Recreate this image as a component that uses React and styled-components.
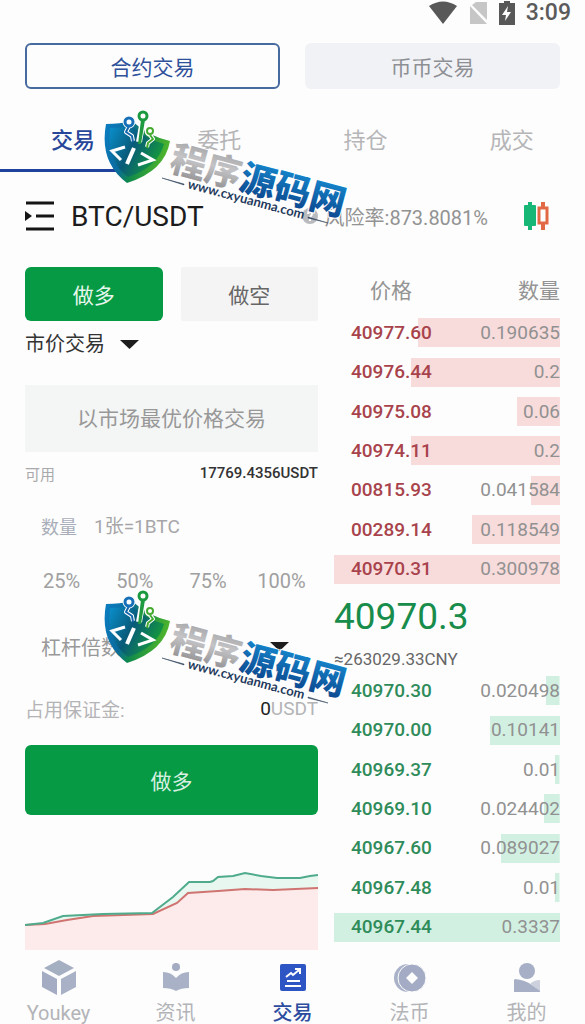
import React, { useState } from "react";
import styled, { createGlobalStyle, css } from "styled-components";

const GlobalStyle = createGlobalStyle`
	* {
		box-sizing: border-box;
	}

	body {
		margin: 0;
		background: #fdfdfd;
		font-family: Roboto, "Noto Sans CJK SC", sans-serif;
		color: #222;
	}

	button,
	input,
	select {
		margin: 0;
		padding: 0;
		border: 0;
		background: none;
		font: inherit;
		color: inherit;
	}

	button,
	select {
		cursor: pointer;
	}
`;

const asks = [
	{ price: "40977.60", amount: "0.190635", depth: 63 },
	{ price: "40976.44", amount: "0.2", depth: 66 },
	{ price: "40975.08", amount: "0.06", depth: 19 },
	{ price: "40974.11", amount: "0.2", depth: 66 },
	{ price: "00815.93", amount: "0.041584", depth: 13 },
	{ price: "00289.14", amount: "0.118549", depth: 39 },
	{ price: "40970.31", amount: "0.300978", depth: 100 },
];

const bids = [
	{ price: "40970.30", amount: "0.020498", depth: 6 },
	{ price: "40970.00", amount: "0.10141", depth: 31 },
	{ price: "40969.37", amount: "0.01", depth: 2 },
	{ price: "40969.10", amount: "0.024402", depth: 7 },
	{ price: "40967.60", amount: "0.089027", depth: 26 },
	{ price: "40967.48", amount: "0.01", depth: 2 },
	{ price: "40967.44", amount: "0.3337", depth: 100 },
];

const Page = styled.div`
	position: relative;
	overflow: hidden;
`;

const StatusBar = styled.div`
	display: flex;
	justify-content: flex-end;
	align-items: center;
	height: 26px;
	padding-right: 14px;
	font-size: 23px;
	font-weight: 500;
	line-height: 26px;
	color: #5b5b5b;

	svg {
		display: block;
		margin-right: 11px;
	}
`;

const Switch = styled.div`
	display: grid;
	grid-template-columns: 1fr 1fr;
	gap: 25px;
	padding: 17px 25px 0;
`;

const SwitchButton = styled.button`
	height: 46px;
	border-radius: 6px;
	font-size: 21px;
	background: #f1f2f6;
	color: #8d8f94;

	${(props) =>
		props.$active &&
		css`
			background: #fdfdfd;
			border: 2px solid #476b9f;
			color: #2f519b;
		`}
`;

const Tabs = styled.nav`
	display: grid;
	grid-template-columns: repeat(4, 1fr);
	margin-top: 17px;
`;

const Tab = styled.button`
	height: 66px;
	border-bottom: 3px solid
		${(props) => (props.$active ? "#1f429c" : "transparent")};
	font-size: 22px;
	font-weight: ${(props) => (props.$active ? 500 : 400)};
	color: ${(props) => (props.$active ? "#27469a" : "#b5b5b7")};
`;

const PairBar = styled.header`
	display: flex;
	align-items: center;
	height: 85px;
	padding: 3px 35px 0 25px;

	svg {
		display: block;
		flex: none;
	}
`;

const Pair = styled.h1`
	flex: 1;
	margin: 0 0 0 16px;
	font-size: 28px;
	font-weight: 400;
	color: #1c1c1c;
`;

const Risk = styled.div`
	display: flex;
	align-items: center;
	gap: 7px;
	margin-right: 36px;
	font-size: 20px;
	color: #939393;
`;

const Columns = styled.main`
	display: grid;
	grid-template-columns: 293fr 226fr;
	gap: 16px;
	padding: 10px 25px 0;
`;

const Form = styled.form`
	display: flex;
	flex-direction: column;
	min-width: 0;
`;

const Sides = styled.div`
	display: grid;
	grid-template-columns: 1fr 1fr;
	gap: 18px;
`;

const SideButton = styled.button`
	height: 54px;
	border-radius: ${(props) => (props.$active ? "6px" : "2px")};
	font-size: 21px;
	background: ${(props) => (props.$active ? "#059a43" : "#f4f4f4")};
	color: ${(props) => (props.$active ? "#e8f7ee" : "#666")};
`;

const SelectBox = styled.div`
	display: flex;
	align-items: center;
	gap: 15px;
	height: 46px;

	svg {
		display: block;
		pointer-events: none;
	}
`;

const Select = styled.select`
	appearance: none;
	font-size: 20px;
	line-height: 30px;
	color: #333;
	outline: none;
`;

const PriceInput = styled.input`
	width: 100%;
	height: 67px;
	margin-top: 18px;
	background: #f4f5f5;
	font-size: 21px;
	text-align: center;

	&::placeholder {
		color: #989898;
		opacity: 1;
	}
`;

const Available = styled.div`
	display: flex;
	justify-content: space-between;
	align-items: center;
	height: 42px;
	font-size: 15px;
	color: #a9a9ab;

	strong {
		font-weight: 500;
		color: #333;
	}
`;

const Quantity = styled.div`
	display: flex;
	align-items: center;
	gap: 17px;
	height: 64px;
	padding-left: 16px;
	font-size: 18px;
	color: #a8adb9;

	input {
		flex: 1;
		min-width: 0;
		font-size: 19px;
		outline: none;
	}

	input::placeholder {
		color: #a6a6a8;
		opacity: 1;
	}
`;

const Percents = styled.div`
	display: grid;
	grid-template-columns: repeat(4, 1fr);
	height: 46px;

	button {
		font-size: 20px;
		color: #a0a0a0;
	}
`;

const Leverage = styled.div`
	display: flex;
	align-items: center;
	height: 84px;
	padding: 0 29px 0 16px;
	font-size: 20px;
	color: #999;

	select {
		flex: 1;
		min-width: 0;
	}

	svg {
		display: block;
		pointer-events: none;
	}
`;

const Margin = styled.div`
	display: flex;
	justify-content: space-between;
	align-items: center;
	height: 40px;
	font-size: 19px;
	color: #b4b4b6;

	b {
		font-weight: 400;
		color: #222;
	}
`;

const Submit = styled.button`
	height: 70px;
	margin-top: 17px;
	border-radius: 6px;
	background: #059a43;
	font-size: 21px;
	color: #d8f0e1;
`;

const Chart = styled.svg`
	display: block;
	width: 100%;
	height: 79px;
	margin-top: 56px;
`;

const Book = styled.section`
	min-width: 0;
`;

const BookBody = styled.tbody`
	height: 276px;
`;

const BookTable = styled.table`
	width: 100%;
	height: ${(props) => (props.$head ? "322px" : "276px")};
	border-collapse: collapse;
	font-size: 19px;
	line-height: 22px;

	th {
		height: 46px;
		padding: 2px 0 0;
		font-size: 21px;
		font-weight: 400;
		color: #949494;
		text-align: right;
	}

	th:first-child {
		padding-left: 36px;
		text-align: left;
	}
`;

const BookRow = styled.tr`
	background: linear-gradient(
			${(props) => (props.$side === "ask" ? "#f8dcdc" : "#d2f0e2")} 0 0
		)
		right center / ${(props) => props.$depth}% 29px no-repeat;

	td {
		padding: 0;
		color: #919191;
		text-align: right;
	}

	td:first-child {
		padding-left: 17px;
		font-weight: 500;
		text-align: left;
		color: ${(props) => (props.$side === "ask" ? "#a8434c" : "#2f8c5a")};
	}
`;

const LastPrice = styled.div`
	font-size: 37px;
	line-height: 56px;
	color: #188c4b;
`;

const Fiat = styled.div`
	padding-top: 2px;
	font-size: 17px;
	line-height: 24px;
	color: #666;
`;

const TabBar = styled.nav`
	display: grid;
	grid-template-columns: repeat(5, 1fr);
	padding-top: 10px;
`;

const TabBarItem = styled.a`
	display: flex;
	flex-direction: column;
	align-items: center;
	gap: 6px;
	font-size: 20px;
	line-height: 22px;
	text-decoration: none;
	color: ${(props) => (props.$active ? "#2c4ca0" : "#b3b4b8")};
	font-weight: ${(props) => (props.$active ? 500 : 400)};

	svg {
		display: block;
	}
`;

const Mark = styled.svg`
	position: absolute;
	left: 100px;
	top: ${(props) => props.$top}px;
	pointer-events: none;
`;

const Caret = () => (
	<svg width="19" height="9" viewBox="0 0 19 9" aria-hidden="true">
		<path d="M0 0h19L9.5 9z" fill="#1d1d1d" />
	</svg>
);

const WifiIcon = () => (
	<svg width="28" height="24" viewBox="0 0 28 24" aria-hidden="true">
		<path d="M0 5Q14-4 28 5L14 23z" fill="#585858" />
	</svg>
);

const NoSimIcon = () => (
	<svg width="20" height="24" viewBox="0 0 20 24" aria-hidden="true">
		<path d="M8 1h11v18L4 4z" fill="#c6c6c6" />
		<path d="M2 5l17 18H2z" fill="#c6c6c6" />
	</svg>
);

const BatteryIcon = () => (
	<svg width="16" height="24" viewBox="0 0 16 24" aria-hidden="true">
		<path d="M5 0h6v2h5v22H0V2h5z" fill="#585858" />
		<path d="M9 5L3 14h4l-1 6 6-9H8z" fill="#fff" />
	</svg>
);

const MenuIcon = () => (
	<svg width="30" height="30" viewBox="0 0 30 30" aria-hidden="true">
		<path
			d="M1 2h28M11 15h18M1 28h28"
			stroke="#151515"
			strokeWidth="3"
		/>
		<path d="M0 10l7 5-7 5z" fill="#151515" />
	</svg>
);

const InfoIcon = () => (
	<svg width="16" height="16" viewBox="0 0 16 16" aria-hidden="true">
		<circle cx="8" cy="8" r="8" fill="#b9bbbf" />
		<path
			d="M6 6q0-2 2-2t2 2q0 1-2 3M8 11v2"
			fill="none"
			stroke="#fff"
			strokeWidth="2"
		/>
	</svg>
);

const CandleIcon = () => (
	<svg width="26" height="30" viewBox="0 0 26 30" aria-hidden="true">
		<rect x="0" y="4" width="12" height="21" rx="1" fill="#17b777" />
		<path d="M6 1v28" stroke="#17b777" strokeWidth="4" />
		<path d="M19 1v6M19 22v7" stroke="#e16a45" strokeWidth="4" />
		<rect
			x="15"
			y="7"
			width="8"
			height="15"
			fill="#fff"
			stroke="#e16a45"
			strokeWidth="3"
		/>
	</svg>
);

const CubeIcon = () => (
	<svg width="36" height="36" viewBox="0 0 36 36" aria-hidden="true">
		<path d="M18 0l15 8-15 8L3 8z" fill="#a5afc2" />
		<path d="M1 11l15 8v16L1 27z" fill="#a3acc3" />
		<path d="M35 11l-15 8v16l15-8z" fill="#a9b1c6" />
	</svg>
);

const NewsIcon = () => (
	<svg width="36" height="36" viewBox="0 0 36 36" aria-hidden="true">
		<circle cx="18" cy="7" r="4" fill="#a3acc0" />
		<path
			d="M5 12q8 0 13 6 5-6 13-6v16q-8 0-13 3-5-3-13-3z"
			fill="#a8b1c6"
		/>
	</svg>
);

const TradeIcon = () => (
	<svg width="36" height="36" viewBox="0 0 36 36" aria-hidden="true">
		<rect x="5" y="4" width="26" height="27" rx="2" fill="#2d55c4" />
		<path
			d="M11 17l5-4 2 2 6-5M20 9h5v5"
			fill="none"
			stroke="#fff"
			strokeWidth="2"
		/>
		<path d="M12 21h13M10 26h16" stroke="#fff" strokeWidth="2" />
	</svg>
);

const CoinIcon = () => (
	<svg width="36" height="36" viewBox="0 0 36 36" aria-hidden="true">
		<path d="M16 4a14 14 0 0 0 0 28" fill="#a9b2c8" />
		<circle
			cx="20"
			cy="18"
			r="14"
			fill="#a3acc4"
			stroke="#fdfdfd"
			strokeWidth="1"
		/>
		<path d="M20 12l6 6-6 6-6-6z" fill="#fdfdfd" />
	</svg>
);

const UserIcon = () => (
	<svg width="36" height="36" viewBox="0 0 36 36" aria-hidden="true">
		<circle cx="18" cy="11" r="8" fill="#a6afc6" />
		<path d="M6 19q10 1 17 6l8 5v2H5V20z" fill="#a6afc6" />
		<path d="M31 20v11l-10-7q4-4 10-4z" fill="#ccd1dd" />
	</svg>
);

const Watermark = ({ id, top }) => (
	<Mark $top={top} width="260" height="120" viewBox="0 0 260 120">
		<defs>
			<linearGradient id={`${id}-shield`} x1="0" y1="0" x2="1" y2="0.3">
				<stop offset="0" stopColor="#0b7fc4" />
				<stop offset="0.4" stopColor="#0a6a9c" />
				<stop offset="0.6" stopColor="#108a4c" />
				<stop offset="1" stopColor="#4db32c" />
			</linearGradient>
			<linearGradient id={`${id}-shade`} x1="0" y1="0" x2="1" y2="0.5">
				<stop offset="0" stopColor="#0a90cf" />
				<stop offset="0.5" stopColor="#085a78" />
				<stop offset="1" stopColor="#159a3c" />
			</linearGradient>
			<linearGradient id={`${id}-silver`} x1="0" y1="0" x2="0" y2="1">
				<stop offset="0" stopColor="#98989a" />
				<stop offset="0.5" stopColor="#c4c4c6" />
				<stop offset="1" stopColor="#88888c" />
			</linearGradient>
			<linearGradient id={`${id}-blue`} x1="0" y1="0" x2="0" y2="1">
				<stop offset="0.2" stopColor="#1585cb" />
				<stop offset="1" stopColor="#0b3f86" />
			</linearGradient>
		</defs>
		<path
			d="M6 16Q20 16 32 13Q48 28 70 33Q65 63 27 75Q-1 54 6 16z"
			fill={`url(#${id}-shield)`}
		/>
		<path
			d="M10 20Q22 20 32 18Q46 31 64 36Q58 59 28 69Q6 52 10 20z"
			fill={`url(#${id}-shade)`}
		/>
		<g fill="none" stroke="#fff" strokeLinejoin="round">
			<path d="M43 12L39 34" strokeWidth="6" />
			<path d="M29 18L26 24 32 28 33 33" strokeWidth="4" />
			<path d="M50 27L53 31 48 35 47 39" strokeWidth="4" />
			<circle cx="29" cy="14" r="4" strokeWidth="5" />
			<circle cx="43" cy="8" r="4" strokeWidth="5" />
			<circle cx="50" cy="23" r="3" strokeWidth="5" />
		</g>
		<g fill="none" strokeLinejoin="round">
			<path d="M29 18L26 24 32 28 33 34" stroke="#1467ae" strokeWidth="2" />
			<circle
				cx="29"
				cy="14"
				r="4"
				fill="#fff"
				stroke="#1670b8"
				strokeWidth="3"
			/>
			<path d="M50 27L53 31 48 35 47 40" stroke="#43a92f" strokeWidth="2" />
			<circle
				cx="50"
				cy="23"
				r="3"
				fill="#fff"
				stroke="#43a92f"
				strokeWidth="2"
			/>
			<circle
				cx="43"
				cy="8"
				r="4"
				fill="#fff"
				stroke="#1c9a40"
				strokeWidth="3"
			/>
		</g>
		<path d="M41 12h4l-4 24h-3z" fill="#1f9a41" />
		<g fill="none" stroke="#fff" strokeWidth="3">
			<path d="M25 39L12 43 21 52" />
			<path d="M34 40L27 56" strokeWidth="4" />
			<path d="M41 45L53 52 38 57" />
		</g>
		<g transform="translate(68 62) rotate(15)">
			<text
				fontFamily="'Noto Sans CJK SC', sans-serif"
				fontSize="36"
				fontWeight="900"
				stroke="#fff"
				strokeWidth="2"
				paintOrder="stroke"
			>
				<tspan fill={`url(#${id}-silver)`}>程序</tspan>
				<tspan fill={`url(#${id}-blue)`}>源码网</tspan>
			</text>
		</g>
		<g transform="translate(87 80) rotate(15)">
			<text
				fontFamily="Lato, sans-serif"
				fontSize="13"
				fontWeight="700"
				fill="#1f3a5c"
			>
				www.cxyuanma.com
			</text>
		</g>
		<path
			d="M62 70L84 76v1zM208 109l20 6-20-5z"
			fill="#33475f"
			stroke="#33475f"
			strokeWidth="0.5"
		/>
	</Mark>
);

const BookRows = ({ rows, side }) => (
	<BookBody>
		{rows.map((row) => (
			<BookRow key={row.price} $side={side} $depth={row.depth}>
				<td>{row.price}</td>
				<td>{row.amount}</td>
			</BookRow>
		))}
	</BookBody>
);

const DepthChart = () => (
	<Chart viewBox="0 0 293 79" preserveAspectRatio="none" aria-hidden="true">
		<path
			d="M0 54L18 52 38 45 78 43 127 42 148 26 164 11 185 11 188 10 193 6 208 5 220 2 236 5 252 7 275 7 285 5 293 4V79H0z"
			fill="#e8f8f1"
		/>
		<path
			d="M0 54L20 53 42 49 68 45 128 43 152 32 163 22 193 20 220 18 248 19 293 17V79H0z"
			fill="#fcebea"
		/>
		<path
			d="M0 54L20 53 42 49 68 45 128 43 152 32 163 22 193 20 220 18 248 19 293 17"
			fill="none"
			stroke="#cf7470"
			strokeWidth="2"
		/>
		<path
			d="M0 54L18 52 38 45 78 43 127 42 148 26 164 11 185 11 188 10 193 6 208 5 220 2 236 5 252 7 275 7 285 5 293 4"
			fill="none"
			stroke="#4fab8c"
			strokeWidth="2"
		/>
	</Chart>
);

const App = () => {
	const [market, setMarket] = useState("合约交易");
	const [tab, setTab] = useState("交易");
	const [side, setSide] = useState("做多");

	return (
		<Page>
			<GlobalStyle />
			<StatusBar>
				<WifiIcon />
				<NoSimIcon />
				<BatteryIcon />
				<span>3:09</span>
			</StatusBar>
			<Switch>
				{["合约交易", "币币交易"].map((name) => (
					<SwitchButton
						key={name}
						type="button"
						$active={market === name}
						onClick={() => setMarket(name)}>
						{name}
					</SwitchButton>
				))}
			</Switch>
			<Tabs>
				{["交易", "委托", "持仓", "成交"].map((name) => (
					<Tab
						key={name}
						type="button"
						$active={tab === name}
						onClick={() => setTab(name)}>
						{name}
					</Tab>
				))}
			</Tabs>
			<PairBar>
				<button type="button" aria-label="菜单">
					<MenuIcon />
				</button>
				<Pair>BTC/USDT</Pair>
				<Risk>
					<InfoIcon />
					<span>风险率:873.8081%</span>
				</Risk>
				<button type="button" aria-label="K线">
					<CandleIcon />
				</button>
			</PairBar>
			<Columns>
				<Form onSubmit={(e) => e.preventDefault()}>
					<Sides>
						{["做多", "做空"].map((name) => (
							<SideButton
								key={name}
								type="button"
								$active={side === name}
								onClick={() => setSide(name)}>
								{name}
							</SideButton>
						))}
					</Sides>
					<SelectBox>
						<Select aria-label="交易类型">
							<option>市价交易</option>
						</Select>
						<Caret />
					</SelectBox>
					<PriceInput
						aria-label="价格"
						placeholder="以市场最优价格交易"
						readOnly
					/>
					<Available>
						<span>可用</span>
						<strong>17769.4356USDT</strong>
					</Available>
					<Quantity>
						<label htmlFor="quantity">数量</label>
						<input id="quantity" placeholder="1张=1BTC" />
					</Quantity>
					<Percents>
						{[25, 50, 75, 100].map((value) => (
							<button key={value} type="button">
								{value}%
							</button>
						))}
					</Percents>
					<Leverage>
						<label htmlFor="leverage">杠杆倍数</label>
						<Select id="leverage">
							<option></option>
						</Select>
						<Caret />
					</Leverage>
					<Margin>
						<span>占用保证金:</span>
						<span>
							<b>0</b>USDT
						</span>
					</Margin>
					<Submit type="submit">{side}</Submit>
					<DepthChart />
				</Form>
				<Book>
					<BookTable $head>
						<thead>
							<tr>
								<th scope="col">价格</th>
								<th scope="col">数量</th>
							</tr>
						</thead>
						<BookRows rows={asks} side="ask" />
					</BookTable>
					<LastPrice>40970.3</LastPrice>
					<Fiat>≈263029.33CNY</Fiat>
					<BookTable>
						<BookRows rows={bids} side="bid" />
					</BookTable>
				</Book>
			</Columns>
			<TabBar>
				<TabBarItem href="#home">
					<CubeIcon />
					Youkey
				</TabBarItem>
				<TabBarItem href="#news">
					<NewsIcon />
					资讯
				</TabBarItem>
				<TabBarItem href="#trade" $active>
					<TradeIcon />
					交易
				</TabBarItem>
				<TabBarItem href="#fiat">
					<CoinIcon />
					法币
				</TabBarItem>
				<TabBarItem href="#mine">
					<UserIcon />
					我的
				</TabBarItem>
			</TabBar>
			<Watermark id="mark-top" top={108} />
			<Watermark id="mark-form" top={588} />
		</Page>
	);
};

export default App;
